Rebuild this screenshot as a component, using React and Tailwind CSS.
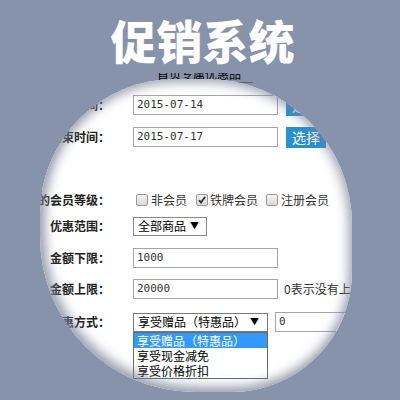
const Label = ({ children }) => (
  <div className="w-[70px] shrink-0 flex justify-end whitespace-nowrap text-[12px] font-bold text-[#222]">
    <span>{children}</span>
  </div>
);

const TextBox = ({ value, className = 'w-[145px]' }) => (
  <div className={`${className} h-5 shrink-0 border border-[#a5a5a5] bg-white flex items-center pl-[3px] font-['DejaVu_Sans_Mono',monospace] text-[11px] text-[#333]`}>
    {value}
  </div>
);

const PickButton = () => (
  <div className="ml-2 w-10 h-[21px] shrink-0 bg-[#2791cd] text-white text-[14px] flex items-center justify-center">
    选择
  </div>
);

const Check = ({ checked }) => (
  <span className="w-3 h-3 shrink-0 rounded-[2px] border border-[#9a9a9a] bg-gradient-to-b from-[#f4f4f4] to-[#d8d8d8] flex items-center justify-center">
    {checked && (
      <svg width="10" height="10" viewBox="0 0 10 10">
        <path d="M2 5.2 L4 7.5 L8.2 1.8" fill="none" stroke="#333" strokeWidth="1.8" />
      </svg>
    )}
  </span>
);

const Arrow = () => <span className="text-[9px] text-black">▼</span>;

const App = () => {
  return (
    <div className="relative w-[400px] h-[400px] overflow-hidden bg-[#8793aa] font-['Noto_Sans_CJK_SC',sans-serif]">
      {/* Title */}
      <h1 className="pt-4 pl-[5px] text-center text-[46px] leading-none font-black text-white">促销系统</h1>

      {/* strip of page peeking above the lens */}
      <div className="absolute left-[148px] top-[73px] w-[105px] h-[10px] overflow-hidden border-b border-[#5f6470]">
        <div className="-mt-[5px] pl-[9px] text-[12px] leading-[12px] text-black whitespace-nowrap">首页专属优惠品</div>
      </div>

      {/* Lens */}
      <div className="absolute left-[40px] top-[79px] w-[312px] h-[313px] overflow-hidden bg-white rounded-tl-[135px] rounded-tr-[145px] rounded-br-[120px] rounded-bl-[155px]">
        <div className="pt-4 flex flex-col text-[#222]">
          <div className="flex items-center h-5">
            <Label>开始时间：</Label>
            <div className="ml-[23px] flex items-center">
              <TextBox value="2015-07-14" />
              <PickButton />
            </div>
          </div>

          <div className="flex items-center h-5 mt-3">
            <Label>结束时间：</Label>
            <div className="ml-[23px] flex items-center">
              <TextBox value="2015-07-17" />
              <PickButton />
            </div>
          </div>

          <div className="flex items-center h-5 mt-[43px]">
            <Label>适用的会员等级：</Label>
            <div className="ml-[26px] flex items-center text-[12px] text-[#333] whitespace-nowrap">
              <Check />
              <span className="ml-[3px]">非会员</span>
              <span className="ml-[9px]"><Check checked /></span>
              <span className="ml-[2px]">铁牌会员</span>
              <span className="ml-2"><Check /></span>
              <span className="ml-[3px]">注册会员</span>
            </div>
          </div>

          <div className="flex items-center h-5 mt-[6px]">
            <Label>优惠范围：</Label>
            <div className="ml-[23px] w-[74px] h-[19px] border border-[#8a8a8a] bg-white flex items-center justify-between pl-1 pr-[7px] text-[12px] text-black">
              <span>全部商品</span>
              <Arrow />
            </div>
          </div>

          <div className="flex items-center h-5 mt-3">
            <Label>金额下限：</Label>
            <div className="ml-[23px]">
              <TextBox value="1000" />
            </div>
          </div>

          <div className="flex items-center h-5 mt-[11px]">
            <Label>金额上限：</Label>
            <div className="ml-[23px] flex items-center">
              <TextBox value="20000" />
              <span className="ml-[6px] text-[12px] text-[#333] whitespace-nowrap">0表示没有上限</span>
            </div>
          </div>

          <div className="flex items-start mt-[13px]">
            <div className="h-[19px] flex items-center">
              <Label>优惠方式：</Label>
            </div>
            <div className="ml-[23px] flex flex-col">
              <div className="flex items-center">
                <div className="w-[135px] h-[19px] border border-[#7a7a7a] bg-white flex items-center justify-between pl-1 pr-2 text-[12px] text-black whitespace-nowrap">
                  <span>享受赠品（特惠品）</span>
                  <Arrow />
                </div>
                <TextBox value="0" className="ml-[7px] w-[80px]" />
              </div>
              <div className="w-[135px] border border-[#6a6a6a] bg-white text-[12px] text-black leading-[15px]">
                <div className="h-[15px] bg-[#3399ff] text-white pl-[3px]">享受赠品（特惠品）</div>
                <div className="h-[15px] pl-[3px]">享受现金减免</div>
                <div className="h-[15px] pl-[3px]">享受价格折扣</div>
              </div>
            </div>
          </div>
        </div>

        {/* edge shading of the lens */}
        <div className="pointer-events-none absolute inset-0 rounded-tl-[135px] rounded-tr-[145px] rounded-br-[120px] rounded-bl-[155px] shadow-[inset_0_0_12px_3px_rgba(120,130,150,0.75),inset_5px_-5px_12px_rgba(120,130,150,0.35)]" />
      </div>
    </div>
  );
};

export default App;
